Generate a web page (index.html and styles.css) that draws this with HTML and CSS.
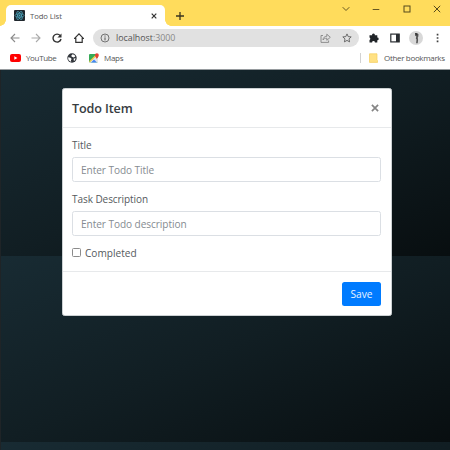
FILE: index.html
```html
<!DOCTYPE html>
<html lang="en">
<head>
<meta charset="utf-8">
<title>Todo List</title>
<link rel="stylesheet" href="styles.css">
</head>
<body>
<div class="browser">
  <header class="tabstrip">
    <div class="tab">
      <svg class="favicon" width="11" height="11" viewBox="0 0 11 11"><rect width="11" height="11" rx="1" fill="#20272d"/><g fill="none" stroke="#4cabc4" stroke-width=".7"><ellipse cx="5.5" cy="5.5" rx="4.5" ry="1.8"/><ellipse cx="5.5" cy="5.5" rx="4.5" ry="1.8" transform="rotate(60 5.5 5.5)"/><ellipse cx="5.5" cy="5.5" rx="4.5" ry="1.8" transform="rotate(120 5.5 5.5)"/></g><circle cx="5.5" cy="5.5" r=".9" fill="#4cabc4"/></svg>
      <span class="tab-title">Todo List</span>
      <svg width="6" height="6" viewBox="0 0 6 6"><path d="M.7.7l4.6 4.6M5.3.7L.7 5.3" stroke="#333" stroke-width="1.2"/></svg>
    </div>
    <svg class="new-tab" width="8" height="8" viewBox="0 0 8 8"><path d="M4 0v8M0 4h8" stroke="#3b351e" stroke-width="1.3"/></svg>
    <div class="window-controls">
      <svg width="8" height="8" viewBox="0 0 8 8"><path d="M.7 2.200L4 5.500l3.300-3.300" fill="none" stroke="#665722"/></svg>
      <svg width="8" height="8" viewBox="0 0 8 8"><path d="M.7 4.500h6.600" stroke="#665722"/></svg>
      <svg width="8" height="8" viewBox="0 0 8 8"><rect x="1" y="1" width="6" height="6" fill="none" stroke="#54481d"/></svg>
      <svg width="8" height="8" viewBox="0 0 8 8"><path d="M.8.8l6.400 6.400M7.200.8L.8 7.200" stroke="#54481d"/></svg>
    </div>
  </header>

  <nav class="toolbar">
    <div class="nav-buttons">
      <svg width="10" height="10" viewBox="0 0 10 10"><path d="M9.500 5H1M5 1L1 5l4 4" fill="none" stroke="#8b8b8b" stroke-width="1.100"/></svg>
      <svg width="10" height="10" viewBox="0 0 10 10"><path d="M.5 5H9M5 1l4 4-4 4" fill="none" stroke="#aaa" stroke-width="1.100"/></svg>
      <svg width="10" height="10" viewBox="0 0 10 10"><path d="M8.200 2.600A4 4 0 1 0 9 6" fill="none" stroke="#333" stroke-width="1.400"/><path d="M9.500.4v4.100H5.400z" fill="#333"/></svg>
      <svg class="home" width="10" height="10" viewBox="0 0 10 10"><path d="M.6 5.400L5 .9l4.400 4.500H8.200v3.900H1.800V5.400z" fill="none" stroke="#333" stroke-width="1.200"/></svg>
    </div>
    <div class="omnibox">
      <svg width="10" height="10" viewBox="0 0 10 10"><circle cx="5" cy="5" r="4" fill="none" stroke="#666" stroke-width=".9"/><path d="M5 4.400v3M5 2.500v1.100" stroke="#555"/></svg>
      <span class="url">localhost<span class="port">:3000</span></span>
      <svg class="share" width="11" height="10" viewBox="0 0 11 10"><path d="M3 2.500H1v6.900h7.600V7.500M3 7c.2-2.500 1.500-3.600 3.800-3.700V1.200l3.500 3.100-3.500 3V5.200C5 5.200 4 5.600 3 7z" fill="none" stroke="#858585" stroke-width=".9"/></svg>
      <svg width="10" height="10" viewBox="0 0 10 10"><path d="M5 .9l1.200 2.700 3 .3-2.200 2 .6 3L5 7.400 2.400 8.900l.6-3-2.200-2 3-.3z" fill="none" stroke="#606060" stroke-width=".9"/></svg>
    </div>
    <div class="extensions">
      <svg width="10" height="10" viewBox="0 0 10 10"><path d="M.5 2.200h2.600a1.400 1.400 0 1 1 2.700 0h2.500v2.300a1.400 1.400 0 0 1 0 2.800v2.200H5.900a1.400 1.400 0 0 0-2.800 0H.5V6.900a1.300 1.300 0 0 0 0-2.400z" fill="#202428"/></svg>
      <svg width="10" height="10" viewBox="0 0 10 10"><rect x=".8" y="1.100" width="8.400" height="7.800" fill="#fff" stroke="#292d31" stroke-width="1.200"/><path d="M6 1h3.200v8H6z" fill="#292d31"/></svg>
      <svg class="avatar" width="14" height="14" viewBox="0 0 14 14"><circle cx="7" cy="7" r="7" fill="#d8d8d8"/><path d="M6 2.300l2-.4 1.500 1.300-.2 2.200-.5 1 .3 2.600-.4 3.200H7.100l.4-3.600-.7-1.200.5-2L6 4.600z" fill="#555"/><path d="M6 2.600l1.600.2.300 1.500" fill="none" stroke="#222" stroke-width=".7"/></svg>
      <svg class="kebab" width="3" height="10" viewBox="0 0 3 10"><path d="M.7.8h1.700v1.600H.7zM.7 4.200h1.700v1.600H.7zM.7 7.600h1.700v1.600H.7z" fill="#414141"/></svg>
    </div>
  </nav>

  <nav class="bookmarks">
    <svg width="11" height="8" viewBox="0 0 11 8"><rect width="11" height="8" rx="2" fill="#f00"/><path d="M4.300 2.200v3.600L7.400 4z" fill="#fff"/></svg>
    <span class="bookmark youtube">YouTube</span>
    <svg class="globe" width="10" height="10" viewBox="0 0 10 10"><circle cx="5" cy="5" r="4.700" fill="#30343a"/><path d="M1.200 4.200l2.300.5 1.200 1.400-.8 1.100.4 1.600C2.200 8.500.8 6.500 1.200 4.200zM5.500 1.200l2 .9.800 1.400-1.500.9-1.500-.5-1.200-1zM6.600 5.600l2-.3-.7 2-1 .7z" fill="#fff"/></svg>
    <svg class="maps" width="10" height="10" viewBox="0 0 10 10"><rect y="1" width="9" height="8.500" rx="1" fill="#36aa57"/><path d="M.5 9.200L6.500 3 9 5v4.500H1z" fill="#e4e6e8"/><path d="M2 9.500l3-3.100 3 3.100z" fill="#4285f4"/><path d="M.5 8.700L8 1.500" stroke="#f8ca42" stroke-width="1.200"/><path d="M7.800 6.200C7.500 4.600 6 4.100 6 2.100a1.900 1.900 0 0 1 3.800 0c0 2-1.500 2.500-2 4.100z" fill="#e34133"/></svg>
    <span class="bookmark map-label">Maps</span>
    <div class="other">
      <svg width="9" height="10" viewBox="0 0 9 10"><path d="M.5.800h7.500v6l.6.700v1.900H.5z" fill="#ffe184" stroke="#f5ce5e" stroke-width=".7"/></svg>
      <span class="bookmark other-label">Other bookmarks</span>
    </div>
  </nav>

  <main class="page">
    <form class="modal">
      <div class="modal-header">
        <h1>Todo Item</h1>
        <svg width="8" height="8" viewBox="0 0 8 8"><path d="M.9.900l6.200 6.200M7.100.9L.9 7.100" stroke="#858585" stroke-width="1.700"/></svg>
      </div>
      <div class="modal-body">
        <label class="field-label" for="title">Title</label>
        <input class="field" id="title" type="text" placeholder="Enter Todo Title">
        <label class="field-label" for="description">Task Description</label>
        <input class="field" id="description" type="text" placeholder="Enter Todo description">
        <label class="check"><input type="checkbox"><span>Completed</span></label>
      </div>
      <div class="modal-footer"><button class="save" type="button">Save</button></div>
    </form>
  </main>
</div>
</body>
</html>
```
FILE: styles.css
```css
* { box-sizing: border-box; }
body { margin: 0; overflow: hidden; font-family: "Open Sans", "Noto Sans", sans-serif; }
svg { display: block; flex: none; }
.browser { width: 450px; height: 450px; display: flex; flex-direction: column; background: #fff; }

.tabstrip { height: 26px; flex: none; display: flex; align-items: flex-end; background: #ffdc5c; padding-left: 6px; }
.tab { position: relative; width: 159px; height: 21px; display: flex; align-items: center; padding: 0 8px; background: #fff; border-radius: 5px 5px 0 0; }
.tab::before, .tab::after { content: ""; position: absolute; bottom: 0; width: 6px; height: 6px; }
.tab::before { left: -6px; background: radial-gradient(circle at 0 0, transparent 5.5px, #fff 6px); }
.tab::after { right: -6px; background: radial-gradient(circle at 100% 0, transparent 5.5px, #fff 6px); }
.tab-title { flex: 1; margin-left: 5px; font-size: 7.7px; line-height: 12px; color: #555; letter-spacing: -0.08px; }
.new-tab { margin: 0 0 6px 11px; }
.window-controls { margin-left: auto; align-self: flex-start; display: flex; gap: 22.5px; padding: 5px 9px 0 0; }

.toolbar { height: 24px; flex: none; display: flex; align-items: center; padding-left: 10px; }
.nav-buttons { display: flex; gap: 11px; }
.home { margin-left: 1px; }
.omnibox { width: 266px; height: 18px; margin-left: 9px; padding: 0 7px; display: flex; align-items: center; border-radius: 9px; background: #e1e1e1; }
.url { flex: 1; margin-left: 6px; font-size: 8.9px; line-height: 16px; color: #555; letter-spacing: -0.03px; }
.port { color: #888; }
.share { margin-right: 11px; }
.extensions { display: flex; align-items: center; margin-left: 10px; }
.extensions svg + svg { margin-left: 11px; }
.extensions .avatar { margin-left: 9px; }
.extensions .kebab { margin-left: 13px; }

.bookmarks { height: 20px; flex: none; display: flex; align-items: center; padding: 0 5px 4px 10px; border-bottom: 1px solid #969b9e; }
.bookmark { font-size: 8px; line-height: 12px; color: #555; white-space: nowrap; }
.youtube { width: 31px; margin-left: 5px; letter-spacing: -0.35px; }
.globe { margin-left: 10px; }
.maps { margin-left: 12px; }
.map-label { margin-left: 5px; letter-spacing: -0.3px; }
.other { margin-left: auto; height: 10px; display: flex; align-items: center; border-left: 1px solid #d2d2d2; padding-left: 8px; }
.other-label { width: 61px; margin-left: 6px; letter-spacing: -0.33px; }

.page { flex: 1; padding: 18px 0 0 61px; border-left: 1px solid #1f2427; background: linear-gradient(to bottom right, #182b33 0%, #111e23 50%, #080e10 100%) 0 0 / 100% 186px; }
.modal { width: 330px; height: 228px; background: #fff; border-radius: 2.5px; border: 1px solid #ccd1d3; }
.modal-header { height: 39px; display: flex; justify-content: space-between; align-items: center; padding: 0 12px 0 9px; border-bottom: 1px solid #e7e9eb; }
h1 { margin: 2px 0 0; font-size: 12.6px; line-height: 18px; font-weight: 600; color: #373c41; letter-spacing: -0.12px; }
.modal-body { height: 144px; display: flex; flex-direction: column; padding: 9px 10px 0 9px; border-bottom: 1px solid #e7e9eb; }
.field-label { height: 16px; font-size: 10px; line-height: 16px; color: #55595d; letter-spacing: -0.06px; }
.field { width: 309px; height: 25px; margin: 4px 0 9px; padding: 1px 8px 0; border: 1px solid #dbdfe4; border-radius: 2.5px; font: 10.1px/20px "Open Sans", sans-serif; letter-spacing: -0.07px; color: #495057; background: #fff; outline: 0; }
.field::placeholder { color: #858b91; opacity: 1; }
.check { display: flex; align-items: center; gap: 4px; font-size: 10.1px; line-height: 16px; color: #55595d; }
.check input { appearance: none; width: 9px; height: 9px; margin: 0 0 1px; border: 1px solid #8b8b8b; border-radius: 1.5px; background: #fff; }
.modal-footer { height: 43px; display: flex; justify-content: flex-end; align-items: center; padding-right: 10px; }
.save { width: 39px; height: 24px; padding: 0; border: 0; border-radius: 2.5px; background: #007bff; color: #e8f3ff; font: 10.2px/20px "Open Sans", sans-serif; }
```
